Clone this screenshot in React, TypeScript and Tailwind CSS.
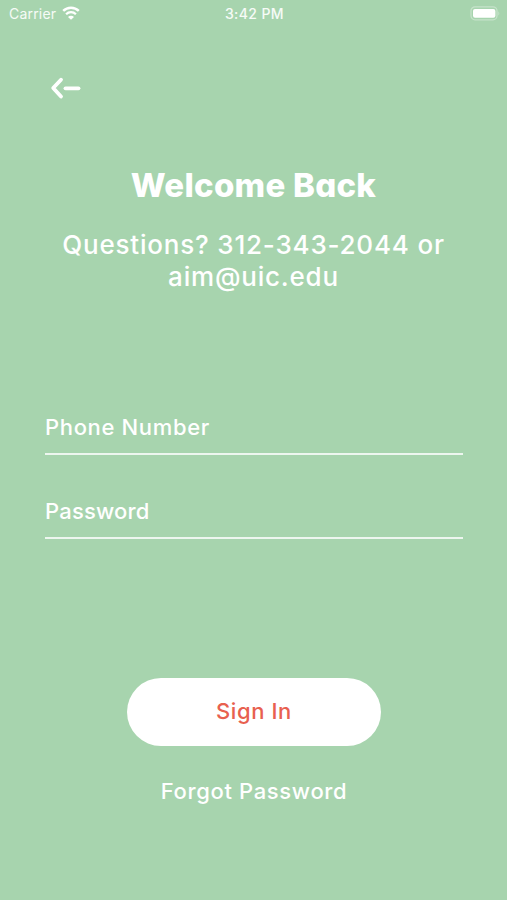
import React, { useState } from 'react';

function StatusBar() {
  return (
    <div className="grid h-[26px] grid-cols-3 items-center pl-[9px] pr-[7px] text-[14px] tracking-[0.2px] text-white/90">
      <div className="flex items-center gap-[6px]">
        <span>Carrier</span>
        <svg width="18" height="14" viewBox="0 0 18 14" fill="none">
          <path d="M1.2 4.9a11.2 11.2 0 0 1 15.6 0" stroke="white" strokeWidth="2.5" />
          <path d="M4.1 8.2a7 7 0 0 1 9.8 0" stroke="white" strokeWidth="2.3" />
          <path d="M9 13.8 6 10.9a4.2 4.2 0 0 1 6 0Z" fill="white" />
        </svg>
      </div>
      <span className="text-center font-medium tracking-[0.4px]">3:42 PM</span>
      <div className="flex justify-end">
        <svg width="30" height="15" viewBox="0 0 30 15">
          <rect x="1" y="0.8" width="26" height="13" rx="4" fill="none" stroke="white" strokeOpacity="0.35" strokeWidth="1.3" />
          <rect x="3" y="3" width="22.4" height="8.8" rx="2" fill="white" />
          <path d="M28.4 5.2c1.2.7 1.2 3.7 0 4.4Z" fill="white" fillOpacity="0.35" />
        </svg>
      </div>
    </div>
  );
}

export default function App() {
  const [phone, setPhone] = useState('');
  const [password, setPassword] = useState('');

  const inputClass =
    'block h-[52px] w-full border-b-2 border-white/80 bg-transparent pb-[2px] text-[22px] font-medium text-white outline-none placeholder:text-white';

  return (
    <div className="flex h-[900px] w-full flex-col bg-[#a7d4ae] font-['Inter',sans-serif] text-white">
      <StatusBar />

      <button aria-label="Back" className="ml-[50px] mt-[50px] w-8">
        <svg width="32" height="24" viewBox="0 0 32 24" fill="none" stroke="white" strokeWidth="3.8" strokeLinecap="round" strokeLinejoin="round">
          <path d="M11 3.7 3.2 12 11 20.5" />
          <path d="M15.5 12.3H28.5" />
        </svg>
      </button>

      <div className="mt-[65px] text-center">
        <h1 className="text-[33px] font-extrabold leading-10 tracking-[0.25px] [font-feature-settings:'cv11']">Welcome Back</h1>
        <p className="mt-[24px] text-[26px] font-medium leading-8 tracking-[0.8px]">
          Questions? 312-343-2044 or
          <br />
          aim@uic.edu
        </p>
      </div>

      <form className="mt-[110px] flex flex-col pl-[45px] pr-[44px]" onSubmit={(e) => e.preventDefault()}>
        <input
          className={`${inputClass} tracking-[0.65px]`}
          placeholder="Phone Number"
          value={phone}
          onChange={(e) => setPhone(e.target.value)}
        />
        <input
          type="password"
          className={`mt-8 tracking-[0.2px] ${inputClass}`}
          placeholder="Password"
          value={password}
          onChange={(e) => setPassword(e.target.value)}
        />
        <button className="mt-[139px] h-[68px] w-[254px] self-center rounded-full bg-white pb-[2px] text-[22px] font-medium tracking-[0.6px] text-[#e8604f]">
          Sign In
        </button>
        <button type="button" className="mt-[29px] self-center text-[22px] font-medium leading-8 tracking-[0.65px]">
          Forgot Password
        </button>
      </form>
    </div>
  );
}
